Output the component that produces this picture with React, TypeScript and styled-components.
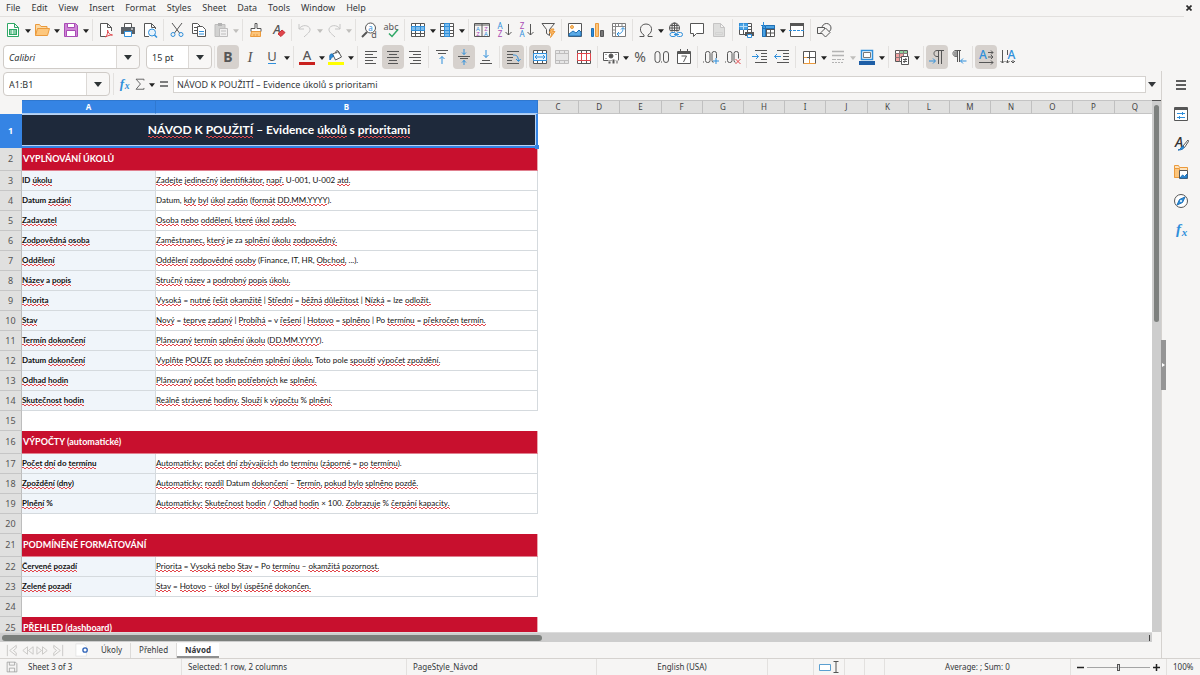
import React, { Fragment, ReactNode } from 'react';
import styled, { createGlobalStyle, css } from 'styled-components';

const ui = '"Noto Sans", "Open Sans", sans-serif';
const sheetFont = 'Lato, "Noto Sans", sans-serif';
const INK = '#565656';
const BLUE = '#2f8fdb';
const ORANGE = '#eb9a3c';
const GREEN = '#2fa866';
const RED = '#e0454b';
const PURPLE = '#a94bb5';
const PALE = '#bdbdbd';

const GlobalStyle = createGlobalStyle`
  * { box-sizing: border-box; }
  html, body { margin: 0; padding: 0; }
  body { background: #f6f5f4; color: #34373a; font-family: ${ui}; font-size: 9px; }
  button, select, input { font: inherit; color: inherit; margin: 0; }
`;

const Page = styled.div`
  display: flex;
  flex-direction: column;
  height: 100vh;
  overflow: hidden;
`;

const MenuBar = styled.nav`
  display: flex;
  flex: none;
  height: 17px;
  margin-right: 16px;
  padding-left: 1px;
  border-bottom: 1px solid #e2e0de;
`;

const MenuItem = styled.button`
  border: 0;
  background: none;
  padding: 0 5px;
  margin-right: 1px;
  line-height: 16px;
`;

const CloseButton = styled.button`
  border: 0;
  background: none;
  padding: 0;
  margin: 0 -8px 0 auto;
  display: flex;
  align-items: center;
  color: #2b2b2b;
`;

const Toolbar = styled.div`
  display: flex;
  flex: none;
  align-items: center;
  height: 27px;
  padding: 0 0 1px 2px;
`;

const ToolButton = styled.button<{ $on?: boolean; $faded?: boolean }>`
  display: flex;
  align-items: center;
  justify-content: center;
  width: 22px;
  height: 24px;
  padding: 0;
  border: 0;
  border-radius: 4px;
  background: ${p => (p.$on ? '#d6d1cd' : 'none')};
  opacity: ${p => (p.$faded ? 0.6 : 1)};
`;

const ArrowButton = styled.button<{ $faded?: boolean }>`
  display: flex;
  align-items: center;
  justify-content: center;
  width: 7px;
  height: 24px;
  padding: 2px 0 0;
  border: 0;
  background: none;
  color: ${p => (p.$faded ? '#c0bfbd' : '#222')};
`;

const Separator = styled.span<{ $wide?: boolean }>`
  width: 1px;
  height: 22px;
  margin: 0 2px 0 ${p => (p.$wide ? 3 : 2)}px;
  background: #e3e1df;
`;

const Combo = styled.label<{ $width: number; $italic?: boolean }>`
  display: grid;
  grid-template-columns: 1fr 23px;
  width: ${p => p.$width}px;
  height: 24px;
  margin-left: 1px;
  border: 1px solid #cfcbc7;
  border-radius: 4px;
  background: linear-gradient(to left, #f8f7f6 22px, #dcd9d6 22px, #dcd9d6 23px, #fff 23px);
  color: #2e3436;
  font-style: ${p => (p.$italic ? 'italic' : 'normal')};

  & + & { margin-left: 6px; }
  select {
    grid-area: 1 / 1 / 2 / 3;
    width: 100%;
    padding: 0 0 0 5px;
    border: 0;
    background: none;
    appearance: none;
  }
  svg {
    grid-area: 1 / 2;
    place-self: center;
    pointer-events: none;
  }
`;

const Body = styled.div`
  display: flex;
  flex: 1;
  min-height: 0;
`;

const Main = styled.main`
  display: flex;
  flex: 1;
  flex-direction: column;
  min-width: 0;
`;

const FormulaBar = styled.div`
  display: flex;
  flex: none;
  align-items: center;
  height: 29px;
  padding: 0 4px 3px 2px;
`;

const FormulaTool = styled.button<{ $width: number }>`
  display: flex;
  align-items: center;
  justify-content: center;
  flex: none;
  width: ${p => p.$width}px;
  height: 20px;
  padding: 0;
  border: 0;
  background: none;
`;

const FormulaInput = styled.input`
  flex: 1;
  min-width: 0;
  height: 17px;
  padding: 0 3px;
  border: 1px solid #d5d2cf;
  background: #fff;
`;

const SheetArea = styled.div`
  display: grid;
  grid-template-columns: minmax(0, 1fr) 9px;
  grid-template-rows: minmax(0, 1fr) 10px;
  flex: 1;
  min-height: 0;
`;

const SheetView = styled.div`
  overflow: hidden;
  background: #fff;
`;

const Grid = styled.table`
  width: calc(100% + 4px);
  table-layout: fixed;
  border-collapse: separate;
  border-spacing: 0;
  font-family: ${sheetFont};
`;

const ColumnHead = styled.th<{ $selected?: boolean; $corner?: boolean }>`
  height: 14px;
  padding: 0;
  border-top: 1px solid #c4c4c4;
  border-right: 1px solid #c0c0c0;
  border-bottom: 1px solid #c4c4c4;
  background: #e0e0df;
  font: 8px/12px ${ui};
  color: #444;
  ${p => p.$selected && css`
    border-color: #2f78d0;
    border-bottom-color: #a9cbf2;
    background: #3584e4;
    color: #fff;
    font-weight: 700;
  `}
  ${p => p.$corner && css`
    border-color: #f6f5f4;
    background: #f6f5f4;
  `}
`;

const RowHead = styled.th<{ $selected?: boolean }>`
  padding: 0;
  border-right: 1px solid #bdbdbd;
  border-bottom: 1px solid #c6c6c6;
  background: #e0e0df;
  font: 9px/16px ${ui};
  color: #555;
  ${p => p.$selected && css`
    border-color: #3584e4;
    background: #3584e4;
    color: #fff;
    font-weight: 700;
  `}
`;

const Row = styled.tr<{ $height: number }>`
  height: ${p => p.$height}px;
`;

const Cell = styled.td<{ $label?: boolean }>`
  padding: 0 0 2px;
  border-right: 1px solid #d5dade;
  border-bottom: 1px solid #d5dade;
  background: ${p => (p.$label ? '#f0f5fa' : '#fff')};
  color: #111;
  font-size: 8px;
  font-weight: ${p => (p.$label ? 700 : 400)};
  line-height: 14px;
  white-space: nowrap;
`;

const SectionCell = styled.td`
  padding: 0 1px 1px;
  border-right: 1px solid #e8a7b0;
  border-bottom: 1px solid #e0808f;
  background: #c8102e;
  color: #fff;
  font-size: 9px;
  font-weight: 700;
  line-height: 14px;
`;

const TitleCell = styled.td`
  position: relative;
  padding: 0;
  border-right: 2px solid #3584e4;
  border-bottom: 2px solid #3584e4;
  background: #1e293b;
  box-shadow: inset -1px -1px 0 #b9d3f3, inset 0 1px 0 #b9d3f3;
  color: #fff;
  font-size: 12px;
  font-weight: 700;
  line-height: 18px;
  text-align: center;
`;

const FillHandle = styled.span`
  position: absolute;
  right: -3px;
  bottom: -3px;
  width: 4px;
  height: 4px;
  background: #3584e4;
`;

const EmptyCell = styled.td`
  padding: 0;
`;

const Misspelled = styled.span`
  padding-bottom: 1px;
  background-image:
    linear-gradient(to right, #e2474c 50%, transparent 50%),
    linear-gradient(to right, transparent 50%, #e2474c 50%);
  background-size: 4px 1px;
  background-position: 0 calc(100% - 1px), 0 100%;
  background-repeat: repeat-x;
`;

const VerticalTrack = styled.div`
  display: flex;
  flex-direction: column;
  align-items: center;
  padding-top: 1px;
  border-top: 1px solid #555;
  background: #cdcdcd;
`;

const VerticalThumb = styled.div`
  width: 5px;
  height: 41%;
  margin-top: 3px;
  border-radius: 3px;
  background: #7d807e;
`;

const HorizontalTrack = styled.div`
  display: flex;
  align-items: center;
  justify-content: space-between;
  padding: 0 2px;
  border-top: 1px solid #dcdcdc;
  background: #cdcdcd;
`;

const HorizontalThumb = styled.div`
  width: 47%;
  height: 6px;
  border-radius: 3px;
  background: #7b7f7c;
`;

const TrackEnd = styled.span`
  width: 1px;
  height: 6px;
  background: #444;
`;

const TabBar = styled.div`
  display: flex;
  flex: none;
  align-items: center;
  height: 16px;
  padding-left: 5px;
`;

const TabNav = styled.button`
  display: flex;
  width: 15px;
  padding: 0;
  border: 0;
  background: none;
`;

const AddSheet = styled.button`
  display: flex;
  width: 14px;
  margin: 0 4px 0 10px;
  padding: 0;
  border: 0;
  background: none;
`;

const Tab = styled.button<{ $active?: boolean }>`
  height: 15px;
  margin-right: 1px;
  padding: 0 8px;
  border: 0;
  border-bottom: 2px solid ${p => (p.$active ? '#8f8f8f' : 'transparent')};
  background: ${p => (p.$active ? '#fff' : 'none')};
  font-size: 8px;
  font-weight: ${p => (p.$active ? 700 : 400)};
  line-height: 13px;
  & + & { box-shadow: -1px 0 0 #dcdad8; }
`;

const Sidebar = styled.aside`
  position: relative;
  display: flex;
  flex: none;
  flex-direction: column;
  align-items: center;
  gap: 5px;
  width: 39px;
  padding-top: 2px;
  border-left: 1px solid #d5d2cf;
`;

const SidebarHandle = styled.button`
  position: absolute;
  top: calc(50% - 25px);
  left: -1px;
  display: flex;
  align-items: center;
  justify-content: center;
  width: 5px;
  height: 50px;
  padding: 0;
  border: 0;
  background: #959595;
`;

const StatusBar = styled.footer`
  display: grid;
  grid-template-columns: 22px 160fr 225fr 190fr 171fr 46fr 31px 20px 20px 186fr 96px 33px;
  flex: none;
  height: 17px;
  border-top: 1px solid #d5d2cf;
  font-size: 8px;
  line-height: 16px;
`;

const StatusItem = styled.div<{ $center?: boolean; $plain?: boolean }>`
  display: flex;
  align-items: center;
  justify-content: ${p => (p.$center ? 'center' : 'flex-start')};
  gap: 3px;
  padding: 0 6px;
  border-right: 1px solid ${p => (p.$plain ? 'transparent' : '#e3e1df')};
  white-space: nowrap;
`;

const ZoomButton = styled.button`
  display: flex;
  padding: 0;
  border: 0;
  background: none;
`;

const ZoomSlider = styled.input`
  flex: 1;
  min-width: 0;
  height: 12px;
  appearance: none;
  background: linear-gradient(#a5a5a5, #a5a5a5) center / 100% 1px no-repeat;
  &::-webkit-slider-thumb {
    appearance: none;
    width: 3px;
    height: 7px;
    border: 1px solid #555;
    background: #ddd;
  }
`;

const IconSvg = styled.svg`
  flex: none;
  overflow: visible;
`;

const Svg = ({ children, size = 16 }: { children: ReactNode; size?: number }) => (
  <IconSvg width={size} height={size} viewBox="0 0 16 16" fill="none" stroke={INK} strokeWidth="1" aria-hidden="true">
    {children}
  </IconSvg>
);

const Triangle = ({ small }: { small?: boolean }) => (
  <svg width={small ? 6 : 8} height={small ? 4 : 5} viewBox="0 0 8 5" fill="currentColor" aria-hidden="true">
    <path d="M0 0h8L4 5z" />
  </svg>
);

const Glyph = ({ x, y, size, fill = INK, children, weight = 400, italic, serif }: {
  x: number; y: number; size: number; fill?: string; children: string; weight?: number; italic?: boolean; serif?: boolean;
}) => (
  <text x={x} y={y} fontSize={size} fill={fill} stroke="none" fontWeight={weight} fontStyle={italic ? 'italic' : 'normal'}
    textAnchor="middle" fontFamily={serif ? '"Liberation Serif", serif' : ui}>{children}</text>
);

const page = 'M2.5 1.5h7l4 4v9h-11z M9.5 1.5v4h4';
const grid = 'M1.5 1.5h13v13h-13z M1.5 4.5h13 M1.5 8.5h13 M1.5 11.5h13 M5.5 1.5v13 M10.5 1.5v13';

const icons: Record<string, ReactNode> = {
  new: <><path d={page} stroke={GREEN} fill="#fff" /><path d="M4 7h8v6H4z" fill={GREEN} stroke="none" /><path d="M5 9h6M5 11h6M7.500 8v4" stroke="#d9f2e4" /></>,
  open: <><path d="M1.500 13.500v-11h4l1.500 2h6v3" fill="#fbd9a4" stroke={ORANGE} /><path d="M1.500 13.500l2-7h12l-2 7z" fill="#fdc77d" stroke={ORANGE} /></>,
  save: <><path d="M1.500 1.500h11l2 2v11h-13z" fill="#cf86d6" stroke={PURPLE} /><path d="M4.500 1.500h7v4h-7z M3.500 8.500h9v6h-9z" fill="#fff" stroke={PURPLE} /></>,
  pdf: <><path d="M8 14.500H2.500v-13h7l4 4V9 M9.500 1.500v4h4" fill="#fff" /><path d="M7.500 15c2-2 2.500-5 2-7 .500 3 2.500 5 5 5-2.500 0-4.500.500-7 2z" stroke={RED} /></>,
  print: <><path d="M4.500 1.500h7v4h-7z" fill="#fff" /><path d="M1 5h14v7H1z" fill="#5a6066" stroke="none" /><path d="M4.500 9.500h7v5h-7z" fill="#fff" stroke={BLUE} /><path d="M11 7h2" stroke="#fff" /></>,
  preview: <><path d="M7 14.500H2.500v-13h7l4 4V7 M9.500 1.500v4h4" fill="#fff" /><circle cx="10" cy="10.500" r="3.500" fill="#e7f3fc" stroke={BLUE} /><path d="M12.500 13l2.500 2.500" stroke={BLUE} strokeWidth="1.500" /></>,
  cut: <><path d="M3 1l7.500 10 M13 1L5.500 11" /><circle cx="4" cy="12.500" r="2" stroke={BLUE} /><circle cx="12" cy="12.500" r="2" stroke={BLUE} /></>,
  copy: <><path d="M1.500 1.500h5l3 3v7h-8z M3 5.500h4 M3 8.500h3" fill="#fff" /><path d="M6.500 4.500h5l3 3v7h-8z" fill="#fff" /><path d="M8 9.500h5 M8 12h5" stroke={BLUE} /></>,
  paste: <><path d="M2 2.500h10v12H2z" fill="#bbb" stroke="#999" /><path d="M5 1h4v3H5z" fill="#888" stroke="none" /><path d="M6.500 6.500h8v8h-8z M8 9h5 M8 12h5" fill="#eee" stroke="#999" /></>,
  brush: <><path d="M7 1.500h2v5h4v3H3v-3h4z" fill="#fff" /><path d="M3.500 9.500h9v5h-10z" fill="#fcc57c" stroke={ORANGE} /><path d="M6 14v-2 M9 14v-2" stroke={ORANGE} /></>,
  clear: <><Glyph x={7} y={12} size={13} italic weight={500}>A</Glyph><path d="M8 12l4-4 3 2.500-4 4z" fill={RED} stroke="#c73036" /></>,
  undo: <path d="M2 2v5h5 M2 7c3-5 10-4 11 0 .500 3-3 5-6 8" stroke="#a8a8a8" />,
  redo: <path d="M14 2v5H9 M14 7c-3-5-10-4-11 0-.500 3 3 5 6 8" stroke="#a8a8a8" />,
  find: <><circle cx="9.500" cy="6" r="5" fill="#fff" /><path d="M6 10l-5 5" strokeWidth="2" /><Glyph x={9.5} y={8.5} size={8} fill={BLUE}>a</Glyph><Glyph x={13} y={15.5} size={9}>d</Glyph></>,
  spell: <><Glyph x={8} y={7.5} size={9}>abc</Glyph><path d="M6 11.500l3 3 6-7" stroke={GREEN} strokeWidth="1.500" /></>,
  row: <><path d={grid} fill="#fff" /><path d="M1.500 4.500h13v4h-13z" fill="#7cbcec" stroke={BLUE} /><path d="M5.500 4.500v4 M10.500 4.500v4" stroke={BLUE} /></>,
  col: <><path d={grid} fill="#fff" /><path d="M5.500 1.500h5v13h-5z" fill="#7cbcec" stroke={BLUE} /><path d="M5.500 4.500h5M5.500 8.500h5M5.500 11.500h5" stroke={BLUE} /></>,
  sort: <><path d="M.500 1.500h15v13H.500z M8 1.500v13 M.500 3h15" /><Glyph x={4} y={8.5} size={6} fill={BLUE}>A</Glyph><Glyph x={4} y={14} size={6} fill={PURPLE}>Z</Glyph><Glyph x={12} y={8.5} size={6} fill={PURPLE}>Z</Glyph><Glyph x={12} y={14} size={6} fill={BLUE}>A</Glyph></>,
  asc: <><Glyph x={4} y={7} size={8} fill={BLUE}>A</Glyph><Glyph x={4} y={15} size={8} fill={PURPLE}>Z</Glyph><path d="M12.500 2v11 M9.500 10l3 3 3-3" /></>,
  desc: <><Glyph x={4} y={7} size={8} fill={PURPLE}>Z</Glyph><Glyph x={4} y={15} size={8} fill={BLUE}>A</Glyph><path d="M12.500 2v11 M9.500 10l3 3 3-3" /></>,
  filter: <><path d="M2 1.500h12.500l-5 6v6l-3-2v-4z" /><path d="M11 7l-1.500 4h2.500l-1.500 4.500 4.500-6h-2.500l1.500-2.500z" fill="#fbb866" stroke={ORANGE} /></>,
  image: <><path d="M1.500 1.500h13v13h-13z" fill="#fff" /><path d="M2 14v-2l4-3 3 2 3-3 2 2v4z" fill="#5aaae6" stroke="#1f6fb5" /><circle cx="5" cy="5" r="1.500" fill="#fbc576" stroke={ORANGE} /></>,
  chart: <><path d="M2.500 6.500h2v8h-2z" fill={BLUE} stroke="#1f6fb5" /><path d="M6.500 1.500h3v13h-3z" fill="#fcc57c" stroke={ORANGE} /><path d="M11.500 8.500h3v6h-3z" fill="#777" /></>,
  pivot: <><path d="M1.500 1.500h13v13h-13z" fill="#fff" stroke="#7a7a7a" /><path d="M1.500 4.500h13 M4.500 1.500v13 M7.500 1.500v3 M11 1.500v3 M1.500 8h3 M1.500 11h3" stroke="#888" /><path d="M6 12c4 0 6-2 6-6 M10 7.500l2-2 2 2 M8 10l-2 2 2 2" stroke={BLUE} /></>,
  omega: <path d="M1.500 14.500h4.500v-1.500C.500 10 1.500 2 8 2s7.500 8 2 11v1.500h4.500" />,
  link: <><circle cx="7.500" cy="6" r="5" /><path d="M2.500 6h10 M3.500 3.500h8 M3.500 8.500h8 M7.500 1v10" /><ellipse cx="7.500" cy="6" rx="2.500" ry="5" /><path d="M3 9.500h13v6H3z" fill="#f6f5f4" stroke="none" /><rect x="3" y="10.500" width="6" height="4" rx="2" stroke={BLUE} /><rect x="9.500" y="10.500" width="6" height="4" rx="2" stroke={BLUE} /><path d="M7 12.500h5" stroke={BLUE} /></>,
  comment: <path d="M1.500 1.500h13v10h-7l-3 3v-3h-3z" fill="#fff" />,
  header: <><path d={page} fill="#cfcfcf" stroke="#a5a5a5" /><path d="M4.500 10.500h7v2h-7z" stroke={PALE} /></>,
  printRange: <><path d="M1.500 1.500h12v11h-12z M1.500 4.500h12 M1.500 7.500h12 M5.500 1.500v11 M9.500 1.500v11" fill="#fff" /><path d="M1.500 1.500h8v6h-8z" fill="#4ba3e3" stroke={BLUE} /><path d="M1.500 4.500h8 M5.500 1.500v6" stroke="#bfe0f7" /><path d="M7 10h9v4H7z" fill={INK} stroke="none" /><path d="M9.500 12.500h4v3h-4z" fill="#fff" stroke={BLUE} /></>,
  freeze: <><path d="M2.500 3.500h12v11h-12z M2.500 7.500h12 M2.500 11h12 M6.500 3.500v11 M10.500 3.500v11" fill="#fff" /><path d="M2.500 3.500h12v3h-12z M2.500 3.500h3v11h-3z" fill="#4ba3e3" stroke="#1f6fb5" /><path d="M3.500 0v5 M1 3l2.500 2.500L6 3" stroke={BLUE} /></>,
  split: <><path d="M1.500 1.500h13v13h-13z" fill="#fff" /><path d="M1 2.500h14" strokeWidth="3" /><path d="M0 8.500h16" stroke={BLUE} strokeDasharray="3 1" /></>,
  shapes: <><circle cx="10.500" cy="6" r="4.500" /><path d="M1.500 5.500h7v6h-7z" fill="#f6f5f4" /><path d="M9.500 6l4.500 4.500-4.500 4.500L5 10.500z" fill="#f6f5f4" /></>,
  bold: <Glyph x={8} y={13} size={14} weight={700}>B</Glyph>,
  italic: <Glyph x={8} y={13} size={15} italic serif>I</Glyph>,
  underline: <><Glyph x={8} y={12} size={13}>U</Glyph><path d="M4 14.500h8" stroke={BLUE} /></>,
  fontColor: <><Glyph x={8} y={11} size={13} weight={500}>A</Glyph><path d="M0 13h16v3H0z" fill="#c9211e" stroke="none" /></>,
  fillColor: <><path d="M4.500 5l6-2.500 3 5.500-6 3z" fill="#fff" /><path d="M8 4.500c-1-4 3-4 3 0" /><path d="M4.500 5c-3-.500-3 2-2.500 6 1-2 2-3 3.500-3.500z" fill={BLUE} stroke="#1f6fb5" /><path d="M0 13h16v3H0z" fill="#ff0" stroke="none" /></>,
  left: <path d="M2 2.500h12 M2 5.500h8 M2 8.500h12 M2 11.500h8 M2 14.500h11" />,
  center: <path d="M2 2.500h12 M4 5.500h8 M2 8.500h12 M4 11.500h8 M3 14.500h10" />,
  right: <path d="M2 2.500h12 M6 5.500h8 M2 8.500h12 M6 11.500h8 M3 14.500h11" />,
  top: <><path d="M2 1.500h12 M4 4.500h8" /><path d="M8 15V7.500 M5.500 10L8 7.500l2.500 2.500" stroke={BLUE} /></>,
  middle: <><path d="M2 7.500h12 M4 9.500h8" /><path d="M8 0v5.500 M6 3.500l2 2 2-2 M8 16v-5 M6 13.500l2-2 2 2" stroke={BLUE} /></>,
  bottom: <><path d="M2 14.500h12 M4 11.500h8" /><path d="M8 1v7.500 M5.500 6L8 8.500 10.500 6" stroke={BLUE} /></>,
  wrap: <><path d="M2 2.500h12 M2 5.500h6 M2 8.500h6 M2 11.500h5 M2 14.500h12" /><path d="M8 6c4 0 5 1 5.500 6 M11 10l2.500 2.500L15.500 10" stroke={BLUE} /></>,
  merge: <><path d={grid} fill="#fff" /><path d="M1.500 4.500h13v7h-13z" fill="#eaf5fd" stroke={BLUE} /><path d="M3 8h10 M5 6L3 8l2 2 M11 6l2 2-2 2" stroke={BLUE} /></>,
  mergeCells: <path d="M1.500 1.500h13v13h-13z M1.500 4.500h13 M1.500 11.500h13 M5.500 1.500v3 M10.500 1.500v3 M5.500 11.500v3 M10.500 11.500v3" fill="#ddd" stroke="#999" />,
  unmerge: <><path d={grid} fill="#fff" /><path d="M1.500 4.500h13v7h-13z M5.500 4.500v7 M10.500 4.500v7" fill="#fff" stroke={RED} /></>,
  currency: <><path d="M.500 3.500h15v8H.500z" fill="#fff" /><circle cx="8" cy="7" r="2" fill={INK} /><path d="M2.500 5.500h1 M12.500 5.500h1 M2.500 9.500h1" /><path d="M5 12h3v3H5z M9 10h3v5H9z M13 11h2v4h-2z" fill={INK} stroke="#f6f5f4" /></>,
  percent: <Glyph x={8} y={13} size={14}>%</Glyph>,
  number: <><rect x="1" y="2.500" width="5" height="11" rx="2.500" /><rect x="9.500" y="2.500" width="5" height="11" rx="2.500" /><path d="M7 13h1" /></>,
  date: <><path d="M1.500 2.500h13v12h-13z" fill="#fff" /><path d="M1.500 4h13" strokeWidth="2" /><path d="M4.500 0v3 M11.500 0v3 M5.500 7h5l-3 6" /></>,
  addDecimal: <><path d="M0 13h1" /><rect x="2.500" y="2.500" width="4.500" height="11" rx="2" /><rect x="9" y="2.500" width="4.500" height="11" rx="2" /><path d="M10.500 9h6v7h-6z" fill="#f6f5f4" stroke="none" /><path d="M13 9v6 M10 12h6" stroke={BLUE} /></>,
  delDecimal: <><path d="M0 13h1" /><rect x="2.500" y="2.500" width="4.500" height="11" rx="2" /><rect x="9" y="2.500" width="4.500" height="11" rx="2" /><path d="M10.500 9.500h6v6.500h-6z" fill="#f6f5f4" stroke="none" /><path d="M10.500 10l5 5 M15.500 10l-5 5" stroke={RED} /></>,
  indent: <><path d="M3 1.500h12 M9 4.500h6 M9 7.500h6 M9 10.500h6 M3 13.500h12" /><path d="M0 7.500h6.500 M4 5l2.500 2.500L4 10" stroke={BLUE} /></>,
  outdent: <><path d="M3 1.500h12 M9 4.500h6 M9 7.500h6 M9 10.500h6 M3 13.500h12" /><path d="M7 7.500H.500 M3 5L.500 7.500 3 10" stroke={BLUE} /></>,
  border: <><path d="M2.500 2.500h12v12h-12z" fill="#fff" /><path d="M8.500 3v8.500 M5.500 8.500H14" /><path d="M2.500 14.500h12 M8.500 10v4 M3 8.500h3" stroke={ORANGE} /></>,
  lineStyle: <><path d="M2 2.500h12 M2 6.500h12" strokeWidth="1.500" stroke="#888" /><path d="M2 10.500h12" stroke="#888" strokeDasharray="4 1" /><path d="M2 13.500h12" stroke="#888" strokeDasharray="2 1" /></>,
  lineColor: <><path d="M2.500 1.500h11v9h-11z" fill="#fff" stroke={BLUE} strokeWidth="1.500" /><path d="M4.500 3.500h7v5h-7z" stroke="#777" /><path d="M0 12h16v4H0z" fill="#1e5ea6" stroke="none" /></>,
  conditional: <><path d="M1.500 1.500h12v11h-12z" fill="#fff" /><path d="M5 2h8v2.500H5z" fill="#8fd19e" stroke="none" /><path d="M2 5h8v3H2z M2 9h4v3H2z" fill="#f2a1a1" stroke="none" /><path d="M1.500 4.500h12 M1.500 8.500h12 M5.500 1.500v11 M9.500 1.500v11" stroke="#8a7a7a" /><path d="M7.500 7.500h7v8h-7z" fill="#fff" /><path d="M9 10.500h4 M9 12.500h4 M12 9l-2 5" /></>,
  ltr: <><path d="M9.500 15V1.500 M12.500 15V1.500 M15 1.500H8c-4 0-4 6 0 6h1.500" /><path d="M0 12h6 M4 9.500L6.500 12 4 14.500" stroke={BLUE} /></>,
  rtl: <><path d="M6.500 13V1.500 M8.500 13V1.500 M10 1.500H5c-4 0-4 6 0 6h1.500" /><path d="M3 7V3l3-1.500v6z" fill="#999" stroke="none" /><path d="M15.500 12H9.500 M12 9.500L9.500 12l2.500 2.500" stroke={BLUE} /></>,
  horizontal: <><Glyph x={5} y={10} size={12} fill={BLUE} weight={500}>A</Glyph><path d="M10 3.500h5 M13 1.500l2 2-2 2 M10 8h5 M13 6l2 2-2 2 M1 13.500h14 M13 11.500l2 2-2 2" /></>,
  vertical: <><Glyph x={11.5} y={10} size={12} fill={BLUE} weight={500}>A</Glyph><path d="M2.500 1v13 M.500 12l2 2 2-2 M7.500 1v5 M7.500 11v3 M5.500 12l2 2 2-2 M13 11v3 M11 12l2 2 2-2" /></>,
  fx: <><Glyph x={5.5} y={12} size={15} fill={BLUE} italic serif weight={700}>f</Glyph><Glyph x={11.5} y={14} size={11} fill={BLUE} italic serif weight={700}>x</Glyph></>,
  sigma: <path d="M12.500 4V2.500H3.500L8.500 8l-5 6h9V12.500" />,
  equals: <path d="M4 6h8 M4 10h8" strokeWidth="1.500" />,
  menu: <path d="M3 4h10 M3 8h10 M3 12h10" stroke="#2b2b2b" strokeWidth="1.500" />,
  properties: <><path d="M1.500 1.500h13v13h-13z" fill="#fff" /><path d="M1.500 3h13" strokeWidth="2" /><path d="M4 7.500h8 M9.500 6v3 M4 11.500h8 M6.500 10v3" stroke={BLUE} /></>,
  styles: <><Glyph x={6} y={12} size={14} italic fill="#333" weight={500}>A</Glyph><path d="M15 5l-5 6 1.500 1.500 4-6z" fill="#fff" /><path d="M5 15c3 0 3-4 5-4 2 1 1 4-5 4z" fill={BLUE} stroke="#1f6fb5" /></>,
  gallery: <><path d="M1.500 13.500v-12h4l1 2h8v3" fill="#fde3bd" stroke={ORANGE} /><path d="M1.500 4.500h5v9h-5z" fill="#fcc57c" stroke={ORANGE} /><path d="M6.500 6.500h8v8h-8z" fill="#fff" /><path d="M7 14l2.500-3 2 1.500L14 10v4z" fill={BLUE} stroke="#1f6fb5" /></>,
  navigator: <><circle cx="8" cy="8" r="6.500" fill="#fff" /><path d="M12 4L9.500 9.500 4 12l2.500-5.500z" fill={BLUE} stroke="#1f6fb5" /><circle cx="8" cy="8" r="1" fill="#fff" stroke="none" /></>,
};

type Tool = { icon: string; label: string; arrow?: boolean; on?: boolean; faded?: boolean };
const t = (icon: string, label: string, flags = ''): Tool => ({
  icon, label, arrow: flags.includes('v'), on: flags.includes('o'), faded: flags.includes('f'),
});

const standardGroups: Tool[][] = [
  [t('new', 'New', 'v'), t('open', 'Open', 'v'), t('save', 'Save', 'v')],
  [t('pdf', 'Export as PDF'), t('print', 'Print'), t('preview', 'Print Preview')],
  [t('cut', 'Cut'), t('copy', 'Copy'), t('paste', 'Paste', 'vf')],
  [t('brush', 'Clone Formatting'), t('clear', 'Clear Formatting')],
  [t('undo', 'Undo', 'vf'), t('redo', 'Redo', 'vf')],
  [t('find', 'Find and Replace'), t('spell', 'Spelling')],
  [t('row', 'Row', 'v'), t('col', 'Column', 'v')],
  [t('sort', 'Sort'), t('asc', 'Sort Ascending'), t('desc', 'Sort Descending'), t('filter', 'AutoFilter')],
  [t('image', 'Insert Image'), t('chart', 'Insert Chart'), t('pivot', 'Pivot Table')],
  [t('omega', 'Special Character', 'v'), t('link', 'Hyperlink'), t('comment', 'Comment'), t('header', 'Headers and Footers', 'f')],
  [t('printRange', 'Print Area'), t('freeze', 'Freeze Rows and Columns', 'v'), t('split', 'Split Window')],
  [t('shapes', 'Show Draw Functions')],
];

const formatGroups: Tool[][] = [
  [t('bold', 'Bold', 'o'), t('italic', 'Italic'), t('underline', 'Underline', 'v')],
  [t('fontColor', 'Font Color', 'v'), t('fillColor', 'Background Color', 'v')],
  [t('left', 'Align Left'), t('center', 'Center Horizontally', 'o'), t('right', 'Align Right')],
  [t('top', 'Align Top'), t('middle', 'Center Vertically', 'o'), t('bottom', 'Align Bottom')],
  [t('wrap', 'Wrap Text', 'o')],
  [t('merge', 'Merge and Center', 'o'), t('mergeCells', 'Merge Cells', 'f'), t('unmerge', 'Unmerge Cells')],
  [t('currency', 'Currency', 'v'), t('percent', 'Percent'), t('number', 'Number'), t('date', 'Date')],
  [t('addDecimal', 'Add Decimal Place'), t('delDecimal', 'Delete Decimal Place')],
  [t('indent', 'Increase Indent'), t('outdent', 'Decrease Indent')],
  [t('border', 'Borders', 'v'), t('lineStyle', 'Border Style', 'vf'), t('lineColor', 'Border Color', 'v')],
  [t('conditional', 'Conditional', 'v')],
  [t('ltr', 'Left-To-Right', 'o'), t('rtl', 'Right-To-Left')],
  [t('horizontal', 'Text direction left to right', 'o'), t('vertical', 'Text direction top to bottom')],
];

const ToolGroups = ({ groups }: { groups: Tool[][] }) => (
  <>
    {groups.map((group, g) => (
      <Fragment key={g}>
        {g > 0 && <Separator $wide={groups[g - 1][groups[g - 1].length - 1].arrow} />}
        {group.map(tool => (
          <Fragment key={tool.icon}>
            <ToolButton $on={tool.on} $faded={tool.faded} aria-label={tool.label}>
              <Svg>{icons[tool.icon]}</Svg>
            </ToolButton>
            {tool.arrow && (
              <ArrowButton $faded={tool.faded} aria-label={`${tool.label} options`}><Triangle small /></ArrowButton>
            )}
          </Fragment>
        ))}
      </Fragment>
    ))}
  </>
);

const known = new Set(['ID', 'Datum', 'U-001', 'U-002', 'Finance', 'IT', 'HR', 'Evidence', 'K', 'k', 's', 'v', 'a', 'je', 'za', 'ke',
  'lze', 'do', 'Po', 'Toto', 'pole', '100']);

const Spelled = ({ text }: { text: string }) => (
  <>
    {text.split(' ').map((word, i) => {
      const [, lead, core, tail] = word.match(/^(\(?)(.*?)(\)?\.?)$/) as RegExpMatchArray;
      const bare = core.replace(/[,.:]+$/, '');
      const fine = known.has(bare) || !/[\p{L}]/u.test(bare);
      const closes = tail.startsWith(')');
      return (
        <Fragment key={i}>
          {i > 0 && ' '}
          {fine ? word : <>{lead}<Misspelled>{closes ? core : core + tail}</Misspelled>{closes && tail}</>}
        </Fragment>
      );
    })}
  </>
);

type SheetRow = { section?: string; cells?: [string, string] };
const rows: SheetRow[] = [
  { section: 'VYPLŇOVÁNÍ ÚKOLŮ' },
  { cells: ['ID úkolu', 'Zadejte jedinečný identifikátor, např. U-001, U-002 atd.'] },
  { cells: ['Datum zadání', 'Datum, kdy byl úkol zadán (formát DD.MM.YYYY).'] },
  { cells: ['Zadavatel', 'Osoba nebo oddělení, které úkol zadalo.'] },
  { cells: ['Zodpovědná osoba', 'Zaměstnanec, který je za splnění úkolu zodpovědný.'] },
  { cells: ['Oddělení', 'Oddělení zodpovědné osoby (Finance, IT, HR, Obchod, ...).'] },
  { cells: ['Název a popis', 'Stručný název a podrobný popis úkolu.'] },
  { cells: ['Priorita', 'Vysoká = nutné řešit okamžitě | Střední = běžná důležitost | Nízká = lze odložit.'] },
  { cells: ['Stav', 'Nový = teprve zadaný | Probíhá = v řešení | Hotovo = splněno | Po termínu = překročen termín.'] },
  { cells: ['Termín dokončení', 'Plánovaný termín splnění úkolu (DD.MM.YYYY).'] },
  { cells: ['Datum dokončení', 'Vyplňte POUZE po skutečném splnění úkolu. Toto pole spouští výpočet zpoždění.'] },
  { cells: ['Odhad hodin', 'Plánovaný počet hodin potřebných ke splnění.'] },
  { cells: ['Skutečnost hodin', 'Reálně strávené hodiny. Slouží k výpočtu % plnění.'] },
  {},
  { section: 'VÝPOČTY (automatické)' },
  { cells: ['Počet dní do termínu', 'Automaticky: počet dní zbývajících do termínu (záporné = po termínu).'] },
  { cells: ['Zpoždění (dny)', 'Automaticky: rozdíl Datum dokončení − Termín, pokud bylo splněno pozdě.'] },
  { cells: ['Plnění %', 'Automaticky: Skutečnost hodin / Odhad hodin × 100. Zobrazuje % čerpání kapacity.'] },
  {},
  { section: 'PODMÍNĚNÉ FORMÁTOVÁNÍ' },
  { cells: ['Červené pozadí', 'Priorita = Vysoká nebo Stav = Po termínu – okamžitá pozornost.'] },
  { cells: ['Zelené pozadí', 'Stav = Hotovo – úkol byl úspěšně dokončen.'] },
  {},
  { section: 'PŘEHLED (dashboard)' },
];

const title = 'NÁVOD K POUŽITÍ – Evidence úkolů s prioritami';
const menus = ['File', 'Edit', 'View', 'Insert', 'Format', 'Styles', 'Sheet', 'Data', 'Tools', 'Window', 'Help'];
const otherColumns = 'CDEFGHIJKLMNOPQ'.split('');

const Spreadsheet = () => (
  <Grid>
    <colgroup>
      <col width="22" />
      <col width="134" />
      <col width="382" />
      {otherColumns.map(c => <col key={c} />)}
    </colgroup>
    <thead>
      <tr>
        <ColumnHead $corner aria-label="Select all" />
        <ColumnHead $selected>A</ColumnHead>
        <ColumnHead $selected>B</ColumnHead>
        {otherColumns.map(c => <ColumnHead key={c}>{c}</ColumnHead>)}
      </tr>
    </thead>
    <tbody>
      <Row $height={34}>
        <RowHead $selected>1</RowHead>
        <TitleCell colSpan={2}><Spelled text={title} /><FillHandle /></TitleCell>
        <EmptyCell colSpan={15} />
      </Row>
      {rows.map((row, i) => (
        <Row key={i} $height={row.section ? 23 : 20}>
          <RowHead>{i + 2}</RowHead>
          {row.section && <SectionCell colSpan={2}>{row.section}</SectionCell>}
          {row.cells && (
            <>
              <Cell $label><Spelled text={row.cells[0]} /></Cell>
              <Cell><Spelled text={row.cells[1]} /></Cell>
            </>
          )}
          <EmptyCell colSpan={row.section || row.cells ? 15 : 17} />
        </Row>
      ))}
    </tbody>
  </Grid>
);

const navShapes = [
  'M2.500 2v12 M12 2.500L5 8l7 5.500v-3L9 8l3-2.500z',
  'M8 4L3 8l5 4z M14 4L9 8l5 4z',
  'M2 4l5 4-5 4z M8 4l5 4-5 4z',
  'M13.500 2v12 M4 2.500L11 8l-7 5.500v-3L7 8 4 5.500z',
];

export default function App() {
  return (
    <Page>
      <GlobalStyle />
      <MenuBar aria-label="Menu">
        {menus.map(m => <MenuItem key={m}>{m}</MenuItem>)}
        <CloseButton aria-label="Close document">
          <svg width="6" height="6" viewBox="0 0 6 6" stroke="currentColor" strokeWidth="1.700"><path d="M.500 .500l5 5M5.500 .500l-5 5" /></svg>
        </CloseButton>
      </MenuBar>
      <Toolbar><ToolGroups groups={standardGroups} /></Toolbar>
      <Toolbar>
        <Combo $width={137} $italic>
          <select aria-label="Font name"><option>Calibri</option></select>
          <Triangle />
        </Combo>
        <Combo $width={66}>
          <select aria-label="Font size"><option>15 pt</option></select>
          <Triangle />
        </Combo>
        <Separator />
        <ToolGroups groups={formatGroups} />
      </Toolbar>
      <Body>
        <Main>
          <FormulaBar>
            <Combo $width={107}>
              <select aria-label="Name box"><option>A1:B1</option></select>
              <Triangle />
            </Combo>
            <Separator $wide />
            <FormulaTool $width={16} aria-label="Function Wizard"><Svg size={14}>{icons.fx}</Svg></FormulaTool>
            <FormulaTool $width={16} aria-label="Select Function"><Svg size={14}>{icons.sigma}</Svg></FormulaTool>
            <ArrowButton aria-label="Function options"><Triangle small /></ArrowButton>
            <FormulaTool $width={18} aria-label="Formula"><Svg>{icons.equals}</Svg></FormulaTool>
            <FormulaInput aria-label="Input line" defaultValue={title} />
            <FormulaTool $width={11} aria-label="Expand formula bar"><Triangle /></FormulaTool>
          </FormulaBar>
          <SheetArea>
            <SheetView><Spreadsheet /></SheetView>
            <VerticalTrack><VerticalThumb /></VerticalTrack>
            <HorizontalTrack><HorizontalThumb /><TrackEnd /></HorizontalTrack>
          </SheetArea>
          <TabBar>
            {navShapes.map((d, i) => (
              <TabNav key={d} aria-label={['First', 'Previous', 'Next', 'Last'][i] + ' sheet'}>
                <Svg size={15}><path d={d} stroke="#c9c7c5" /></Svg>
              </TabNav>
            ))}
            <AddSheet aria-label="Add sheet">
              <Svg size={14}>
                <path d="M1 1h9l3 3v11H1z" fill="#fff" stroke="#e3e3e3" />
                <circle cx="11.500" cy="8" r="2.500" fill="#fff" stroke="#2d62b8" strokeWidth="1.500" />
              </Svg>
            </AddSheet>
            <Tab>Úkoly</Tab>
            <Tab>Přehled</Tab>
            <Tab $active>Návod</Tab>
          </TabBar>
        </Main>
        <Sidebar>
          {['menu', 'properties', 'styles', 'gallery', 'navigator', 'fx'].map(name => (
            <ToolButton key={name} aria-label={name}><Svg>{icons[name]}</Svg></ToolButton>
          ))}
          <SidebarHandle aria-label="Collapse sidebar">
            <svg width="3" height="4" viewBox="0 0 3 4" fill="#fff"><path d="M0 0l3 2-3 2z" /></svg>
          </SidebarHandle>
        </Sidebar>
      </Body>
      <StatusBar>
        <StatusItem $plain>
          <Svg size={12}><path d="M1.500 1.500h11l2 2v11h-13z M4.500 1.500v4h7v-4 M4.500 14.500v-5h7v5" stroke="#999" /></Svg>
        </StatusItem>
        <StatusItem>Sheet 3 of 3</StatusItem>
        <StatusItem>Selected: 1 row, 2 columns</StatusItem>
        <StatusItem>PageStyle_Návod</StatusItem>
        <StatusItem $center>English (USA)</StatusItem>
        <StatusItem />
        <StatusItem $center>
          <IconSvg width="20" height="12" viewBox="0 0 20 12" fill="none" aria-hidden="true">
            <path d="M.500 3.500h11v6H.500z" fill="#fff" stroke="#5b9fd0" />
            <path d="M14.500 .500h5 M17 .500v11 M14.500 11.500h5" stroke="#555" />
          </IconSvg>
        </StatusItem>
        <StatusItem />
        <StatusItem />
        <StatusItem $center>Average: ; Sum: 0</StatusItem>
        <StatusItem>
          <ZoomButton aria-label="Zoom out"><svg width="7" height="7" stroke="#222" strokeWidth="1.500"><path d="M0 3.500h7" /></svg></ZoomButton>
          <ZoomSlider type="range" aria-label="Zoom" min={20} max={180} defaultValue={100} />
          <ZoomButton aria-label="Zoom in"><svg width="7" height="7" stroke="#222" strokeWidth="1.500"><path d="M0 3.500h7M3.500 0v7" /></svg></ZoomButton>
        </StatusItem>
        <StatusItem $plain>100%</StatusItem>
      </StatusBar>
    </Page>
  );
}
